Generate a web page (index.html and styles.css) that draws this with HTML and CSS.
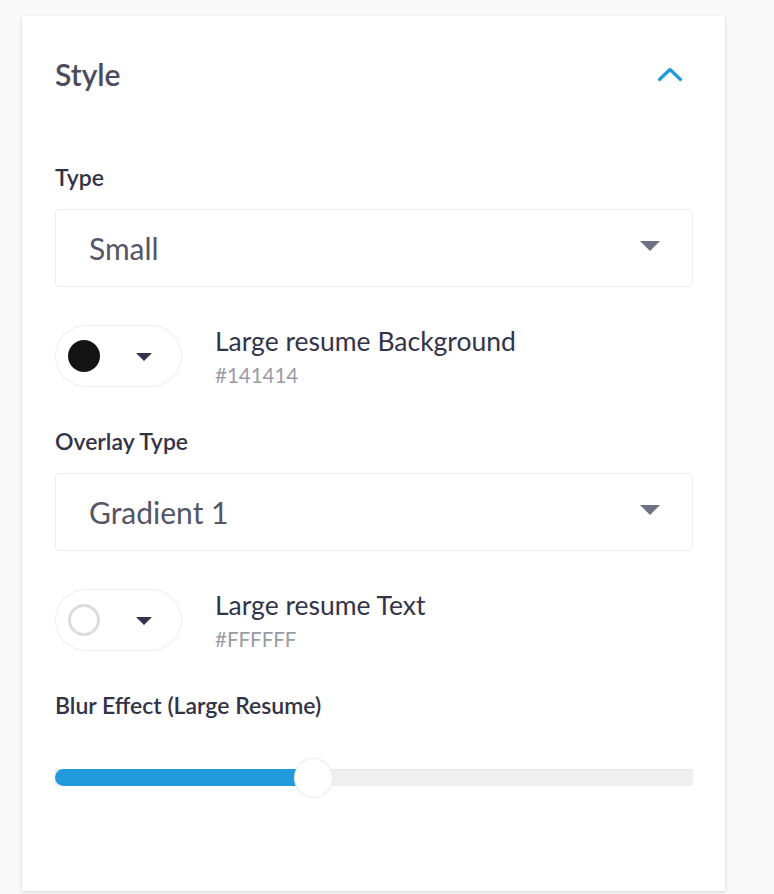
FILE: index.html
```html
<!DOCTYPE html>
<html>
<head>
<meta charset="utf-8">
<link rel="stylesheet" href="styles.css">
</head>
<body>
<div class="card">
  <div class="header">
    <h2 class="title">Style</h2>
    <svg class="chevron" width="26" height="15" viewBox="0 0 26 15"><polyline points="2.5,12.5 13,2.5 23.5,12.5" fill="none" stroke="#229bdd" stroke-width="3.2" stroke-linecap="round" stroke-linejoin="round"/></svg>
  </div>

  <div class="field-label first">Type</div>
  <div class="select">
    <span class="select-value">Small</span>
    <svg class="select-caret" width="20" height="10" viewBox="0 0 20 10"><polygon points="0,0 20,0 10,10" fill="#717182"/></svg>
  </div>

  <div class="color-row">
    <div class="pill">
      <span class="swatch swatch-dark"></span>
      <svg class="pill-caret" width="16" height="8" viewBox="0 0 16 8"><polygon points="0,0 16,0 8,8" fill="#33344a"/></svg>
    </div>
    <div class="color-text">
      <div class="color-name">Large resume Background</div>
      <div class="color-hex">#141414</div>
    </div>
  </div>

  <div class="field-label">Overlay Type</div>
  <div class="select">
    <span class="select-value">Gradient 1</span>
    <svg class="select-caret" width="20" height="10" viewBox="0 0 20 10"><polygon points="0,0 20,0 10,10" fill="#717182"/></svg>
  </div>

  <div class="color-row">
    <div class="pill">
      <span class="swatch swatch-light"></span>
      <svg class="pill-caret" width="16" height="8" viewBox="0 0 16 8"><polygon points="0,0 16,0 8,8" fill="#33344a"/></svg>
    </div>
    <div class="color-text">
      <div class="color-name">Large resume Text</div>
      <div class="color-hex">#FFFFFF</div>
    </div>
  </div>

  <div class="field-label">Blur Effect (Large Resume)</div>
  <div class="slider">
    <div class="track">
      <div class="fill" style="width: 40.5%"></div>
      <div class="thumb" style="left: 40.5%"></div>
    </div>
  </div>
</div>
</body>
</html>
```

FILE: styles.css
```css
html, body {
  margin: 0;
  padding: 0;
}
body {
  background: #f9f9f9;
  font-family: "Lato", "Liberation Sans", sans-serif;
  padding: 16px 0 0 22px;
  height: 894px;
  box-sizing: border-box;
  overflow: hidden;
}
.card {
  width: 703px;
  height: 875px;
  box-sizing: border-box;
  background: #fff;
  padding: 0 32px 0 33px;
  box-shadow: 0 1px 3px rgba(0, 0, 0, 0.16);
}
.header {
  height: 116px;
  display: flex;
  align-items: center;
  justify-content: space-between;
  padding-right: 10px;
}
.title {
  margin: 0;
  font-size: 30px;
  font-weight: 600;
  color: #4b4b5d;
  line-height: 34px;
}
.chevron {
  display: block;
}
.field-label {
  font-size: 23px;
  line-height: 26px;
  font-weight: 600;
  color: #333347;
  margin: 41px 0 19px;
}
.field-label.first {
  margin-top: 32px;
}
.select {
  height: 78px;
  box-sizing: border-box;
  border: 1.5px solid #ededed;
  border-radius: 4px;
  display: flex;
  align-items: center;
  justify-content: space-between;
  padding: 0 32px 0 33px;
}
.select-value {
  font-size: 30px;
  color: #555567;
  line-height: 36px;
}
.select-caret {
  display: block;
  margin-top: -4px;
}
.color-row {
  margin-top: 38px;
  display: flex;
  align-items: flex-start;
  gap: 33px;
}
.pill {
  width: 127px;
  height: 62px;
  box-sizing: border-box;
  border: 1.5px solid #ededed;
  border-radius: 31px;
  display: flex;
  align-items: center;
  padding-left: 12px;
}
.swatch {
  width: 32px;
  height: 32px;
  border-radius: 50%;
  box-sizing: border-box;
  display: block;
}
.swatch-dark {
  background: #141414;
}
.swatch-light {
  background: #fff;
  border: 3.5px solid #dcdcdc;
}
.pill-caret {
  display: block;
  margin-left: 36px;
  margin-top: 1px;
}
.color-text {
  display: flex;
  flex-direction: column;
  margin-top: 1px;
}
.color-name {
  font-size: 26.5px;
  line-height: 30px;
  color: #33344a;
}
.color-hex {
  font-size: 20.5px;
  line-height: 24px;
  color: #9b9ba7;
  margin-top: 7px;
}
.slider {
  margin-top: 39px;
  height: 40px;
  display: flex;
  align-items: center;
}
.track {
  position: relative;
  width: 100%;
  height: 17px;
  background: #efefef;
  border-top: 1px solid #e4e8ee;
  box-sizing: border-box;
}
.fill {
  position: absolute;
  left: 0;
  top: -1px;
  bottom: 0;
  background: #229bdd;
  border-radius: 9px 0 0 9px;
}
.thumb {
  position: absolute;
  top: 50%;
  width: 39px;
  height: 40px;
  margin: -20px 0 0 -19.5px;
  box-sizing: border-box;
  background: #fff;
  border: 1.5px solid #ececec;
  border-radius: 50%;
  box-shadow: 0 0 1px rgba(0, 0, 0, 0.05);
}
```
